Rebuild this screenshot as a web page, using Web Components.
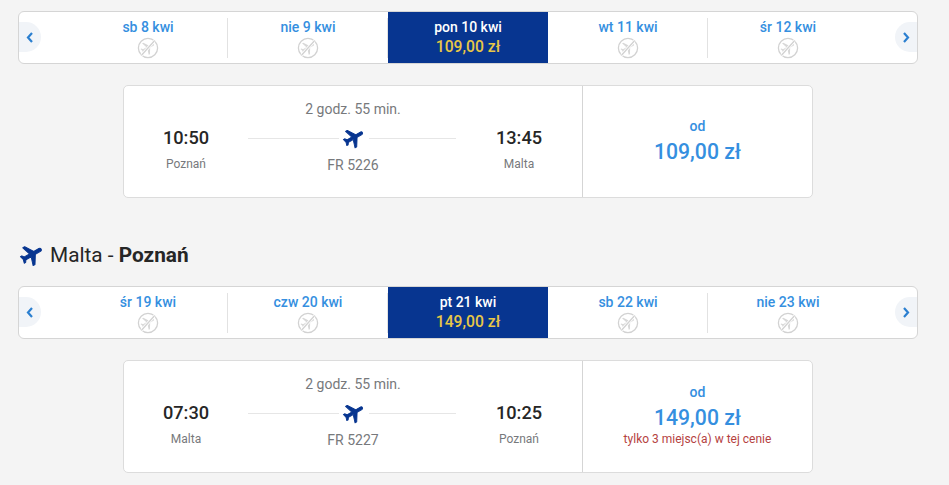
<!DOCTYPE html>
<html lang="pl">
<head>
<meta charset="utf-8">
<title>Loty</title>
<style>
  html, body { margin: 0; height: 485px; overflow: hidden; background: #f4f4f4; }
  body { font-family: Roboto, "Liberation Sans", sans-serif; color: #262626; padding: 11px 0 0 18px; box-sizing: border-box; }
</style>
</head>
<body>
<date-bar>
  <date-cell label="sb 8 kwi"></date-cell>
  <date-cell label="nie 9 kwi"></date-cell>
  <date-cell label="pon 10 kwi" price="109,00 zł"></date-cell>
  <date-cell label="wt 11 kwi"></date-cell>
  <date-cell label="śr 12 kwi"></date-cell>
</date-bar>
<flight-card dep="10:50" dep-city="Poznań" arr="13:45" arr-city="Malta" flight="FR 5226" price="109,00 zł"></flight-card>
<route-heading from="Malta" to="Poznań"></route-heading>
<date-bar>
  <date-cell label="śr 19 kwi"></date-cell>
  <date-cell label="czw 20 kwi"></date-cell>
  <date-cell label="pt 21 kwi" price="149,00 zł"></date-cell>
  <date-cell label="sb 22 kwi"></date-cell>
  <date-cell label="nie 23 kwi"></date-cell>
</date-bar>
<flight-card class="last" dep="07:30" dep-city="Malta" arr="10:25" arr-city="Poznań" flight="FR 5227" price="149,00 zł" note="tylko 3 miejsc(a) w tej cenie"></flight-card>

<script>
// samolot uzywany w naglowku i na karcie lotu
const PLANE_PATH = 'M21 16v-2l-8-5V3.5c0-.83-.67-1.5-1.5-1.5S10 2.67 10 3.5V9l-8 5v2l8-2.5V19l-2 1.5V22l3.5-1 3.5 1v-1.5L13 19v-5.5l8 2.5z';

class PlaneIcon extends HTMLElement {
    connectedCallback() {
        const size = this.getAttribute('size') || 24;
        this.attachShadow({mode: 'open'}).innerHTML = `
        <style>
            :host { display: inline-flex; width: ${size}px; height: ${size}px; flex: none; }
            svg { width: 100%; height: 100%; fill: #073590; stroke: #073590; stroke-width: .9; stroke-linejoin: round; }
        </style>
        <svg viewBox="0 0 24 24"><path transform="rotate(60 12 12)" d="${PLANE_PATH}"/></svg>`;
    }
}
customElements.define('plane-icon', PlaneIcon);

class DateBar extends HTMLElement {
    connectedCallback() {
        this.attachShadow({mode: 'open'}).innerHTML = `
        <style>
            :host {
                display: flex; box-sizing: border-box; width: 900px; height: 53px;
                padding: 0 49px; background: #fff; border: 1px solid #d5d5d5; border-radius: 6px;
                position: relative; overflow: hidden;
            }
            .arrow {
                position: absolute; top: 10px; width: 22px; height: 30px; background: #f1f4f8;
                display: flex; align-items: center; justify-content: center;
            }
            .prev { left: 0; border-radius: 0 15px 15px 0; }
            .next { right: 0; border-radius: 15px 0 0 15px; }
            svg { width: 8px; height: 11px; fill: none; stroke: #2b7fd0; stroke-width: 2.2; }
        </style>
        <div class="arrow prev"><svg viewBox="0 0 8 11"><path d="M6 1 2 5.500 6 10"/></svg></div>
        <slot></slot>
        <div class="arrow next"><svg viewBox="0 0 8 11"><path d="M2 1 6 5.500 2 10"/></svg></div>`;
    }
}
customElements.define('date-bar', DateBar);

class DateCell extends HTMLElement {
    connectedCallback() {
        const price = this.getAttribute('price');
        const label = this.getAttribute('label');
        // komorka bez ceny pokazuje przekreslony samolot
        const body = price
            ? `<div class="price">${price}</div>`
            : `<svg class="none" viewBox="0 0 22 22">
                 <circle cx="11" cy="11" r="9.6"/>
                 <path class="pl" transform="rotate(60 11 11) translate(2.600 2.600) scale(.7)" d="${PLANE_PATH}"/>
                 <path class="gap" d="M4.500 18.300 17.500 3.700"/>
                 <path d="M4.500 18.300 17.500 3.700"/>
               </svg>`;
        this.attachShadow({mode: 'open'}).innerHTML = `
        <style>
            :host {
                display: block; box-sizing: border-box; width: 160px; text-align: center;
                position: relative; padding-top: 7px; height: 51px;
                font: 500 14px/16px Roboto, "Liberation Sans", sans-serif; color: #358fdf;
            }
            :host([price]) { background: #073590; color: #fff; }
            :host(:not([price]):not(:nth-child(3)):not(:last-child))::after {
                content: ""; position: absolute; right: 0; top: 6px; bottom: 5px; width: 1px; background: #e2e2e2;
            }
            .price { color: #e8c746; font-size: 15.700px; line-height: 20px; margin-top: 2px; }
            .none { display: block; width: 22px; height: 22px; margin: 2px auto 0; fill: none; stroke: #d2d2d2; stroke-width: 1.300; }
            .none .pl { fill: #d8d8d8; stroke: none; }
            .none .gap { stroke: #fff; stroke-width: 3; }
        </style>
        <div>${label}</div>
        ${body}`;
    }
}
customElements.define('date-cell', DateCell);

class FlightCard extends HTMLElement {
    connectedCallback() {
        const a = (n) => this.getAttribute(n) || '';
        const note = a('note');
        this.attachShadow({mode: 'open'}).innerHTML = `
        <style>
            :host {
                display: grid; grid-template-columns: 459px 1fr; box-sizing: border-box;
                width: 690px; height: 113px; margin: 21px 0 0 105px;
                background: #fff; border: 1px solid #dcdcdc; border-radius: 5px;
            }
            .left { display: grid; grid-template-columns: 124px 1fr 124px; border-right: 1px solid #d5d5d5; }
            .end { text-align: center; padding-top: 41px; }
            .end:last-child { padding-right: 2px; }
            .time { font: 500 18.200px/22px Roboto, "Liberation Sans", sans-serif; color: #262626; }
            .city { font-size: 12px; line-height: 14px; color: #77797c; margin-top: 8px; }
            .mid { text-align: center; color: #77797c; font-size: 14px; line-height: 16px; padding-top: 15px; }
            .line { display: flex; align-items: center; justify-content: center; height: 24px; margin: 9px 2px 7px 0; background: linear-gradient(#e6e6e6,#e6e6e6) center/100% 1px no-repeat; }
            .line span { display: flex; background: #fff; padding: 0 3px; margin-left: 4px; }
            .fare { display: flex; flex-direction: column; justify-content: center; text-align: center; color: #358fdf; font-weight: 500; }
            .od { font-size: 14px; line-height: 15px; }
            .price { font-size: 21.200px; line-height: 25px; margin-top: 5px; }
            .note { font-size: 12px; font-weight: 400; line-height: 14px; color: #b5423f; margin: 2px 0 2px; }
        </style>
        <div class="left">
            <div class="end"><div class="time">${a('dep')}</div><div class="city">${a('dep-city')}</div></div>
            <div class="mid">
                <div>2 godz. 55 min.</div>
                <div class="line"><span><plane-icon size="24"></plane-icon></span></div>
                <div>${a('flight')}</div>
            </div>
            <div class="end"><div class="time">${a('arr')}</div><div class="city">${a('arr-city')}</div></div>
        </div>
        <div class="fare">
            <div class="od">od</div>
            <div class="price">${a('price')}</div>
            ${note ? `<div class="note">${note}</div>` : ''}
        </div>`;
    }
}
customElements.define('flight-card', FlightCard);

class RouteHeading extends HTMLElement {
    connectedCallback() {
        this.attachShadow({mode: 'open'}).innerHTML = `
        <style>
            :host {
                display: flex; align-items: center; gap: 5px; height: 26px; margin: 44px 0 18px 0;
                font: 400 20.800px/26px Roboto, "Liberation Sans", sans-serif; color: #262626;
            }
            b { font-weight: 700; }
            plane-icon { margin-left: 1px; }
        </style>
        <plane-icon size="26"></plane-icon>
        <div>${this.getAttribute('from')} - <b>${this.getAttribute('to')}</b></div>`;
    }
}
customElements.define('route-heading', RouteHeading);
</script>
</body>
</html>
